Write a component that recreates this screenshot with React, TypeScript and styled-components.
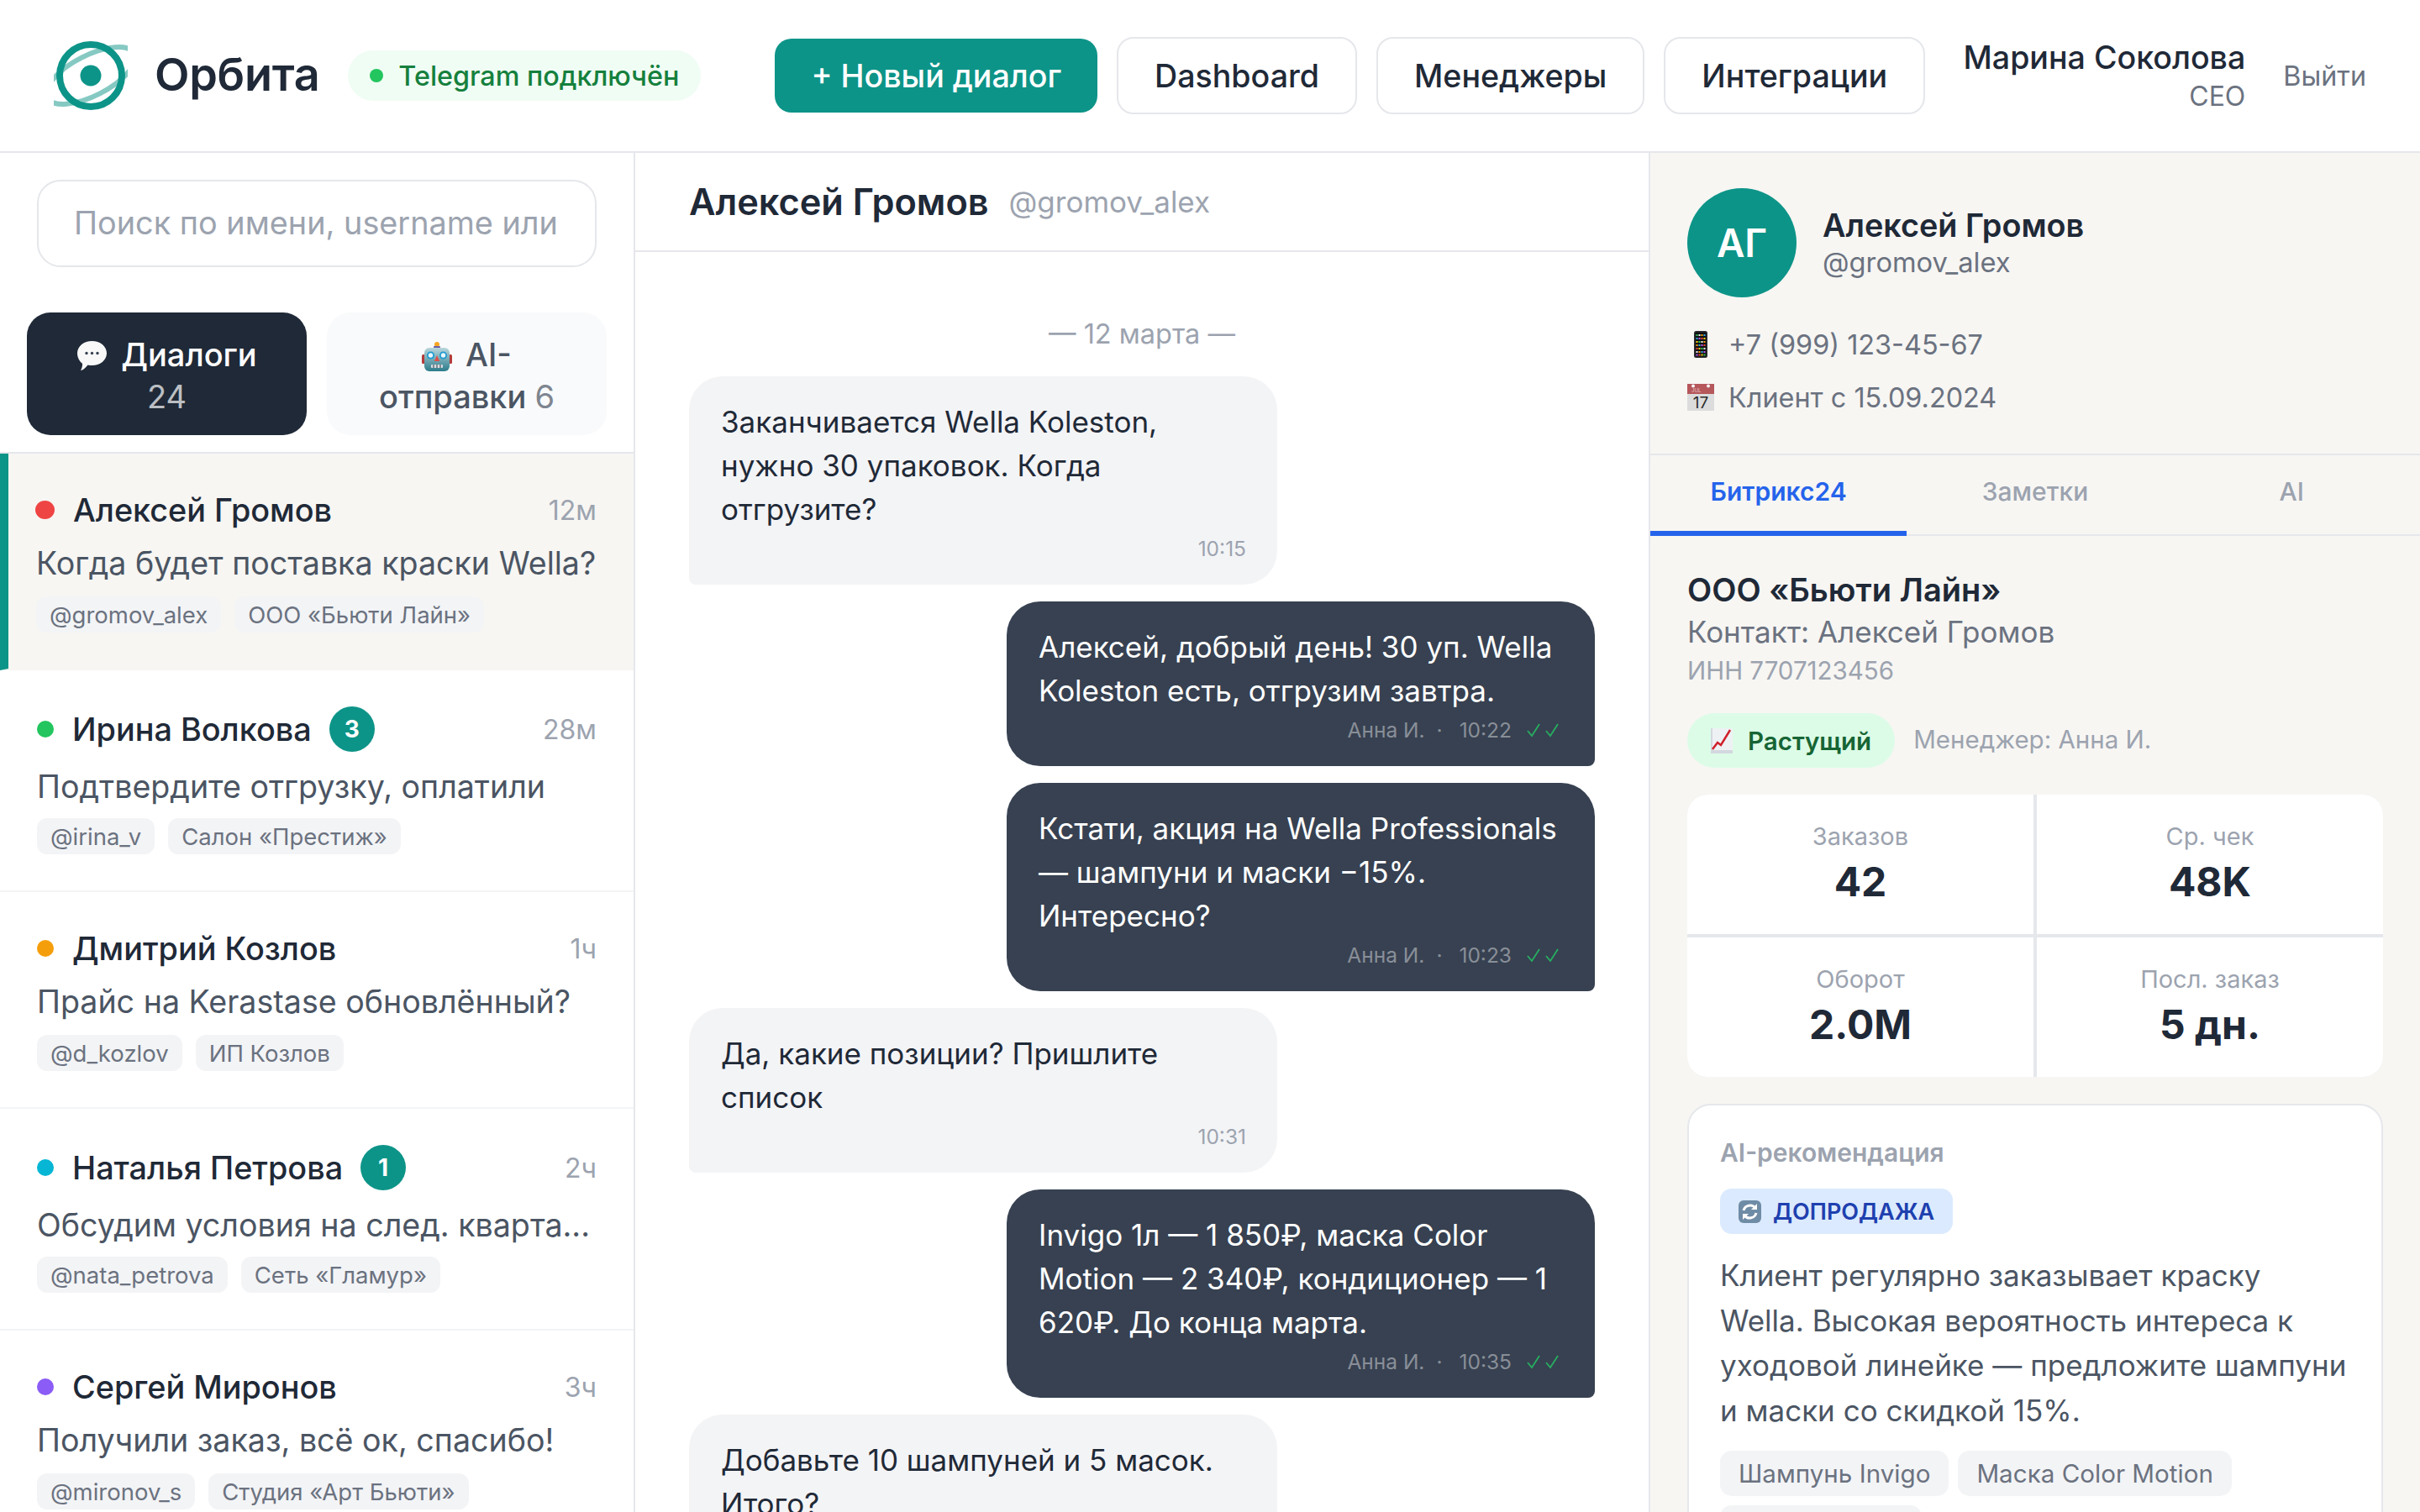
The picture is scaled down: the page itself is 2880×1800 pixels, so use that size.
import React from "react";
import styled, { createGlobalStyle } from "styled-components";

const GlobalStyle = createGlobalStyle`
  * { box-sizing: border-box; }
  html, body { margin: 0; padding: 0; height: 1800px; overflow: hidden; background: #fff; }
  body { font-family: Inter, "Noto Sans", sans-serif; color: #1f2937; }
  #root { height: 1800px; }
`;

const teal = "#0d9488";

const Page = styled.div`
  display: flex;
  flex-direction: column;
  width: 2880px;
  height: 1800px;
  overflow: hidden;
`;

const Header = styled.header`
  display: flex;
  align-items: center;
  height: 182px;
  flex: none;
  padding: 0 64px;
  border-bottom: 2px solid #e5e7eb;
  white-space: nowrap;
`;

const Logo = styled.svg`
  width: 88px;
  height: 88px;
  flex: none;
`;

const Brand = styled.div`
  margin: 0 0 3px 32px;
  font-size: 54px;
  font-weight: 600;
  letter-spacing: -0.3px;
  color: #1f2937;
`;

const StatusPill = styled.div`
  display: flex;
  align-items: center;
  gap: 18px;
  height: 60px;
  margin-left: 34px;
  padding: 0 26px;
  border-radius: 30px;
  background: #f0fdf4;
  color: #15803d;
  font-size: 32.300px;
  font-weight: 500;
`;

const StatusDot = styled.span`
  width: 16px;
  height: 16px;
  border-radius: 50%;
  background: #22c55e;
`;

const Nav = styled.nav`
  display: flex;
  align-items: center;
  gap: 23px;
  margin-left: 88px;
`;

const NavButton = styled.button<{ $primary?: boolean }>`
  height: ${(p) => (p.$primary ? "88px" : "92px")};
  padding: 0 43px;
  border: ${(p) => (p.$primary ? "none" : "2px solid #e5e7eb")};
  border-radius: 20px;
  background: ${(p) => (p.$primary ? teal : "#fff")};
  color: ${(p) => (p.$primary ? "#fff" : "#1f2937")};
  font-family: inherit;
  font-size: 37.600px;
  font-weight: 500;
`;

const User = styled.div`
  margin-left: auto;
  text-align: right;
`;

const UserName = styled.div`
  font-size: 37.600px;
  font-weight: 500;
  line-height: 48px;
  color: #1f2937;
`;

const UserRole = styled.div`
  margin-top: 2px;
  font-size: 32px;
  line-height: 40px;
  color: #6b7280;
`;

const Logout = styled.div`
  margin-left: 45px;
  font-size: 32.300px;
  color: #6b7280;
`;

const Main = styled.main`
  display: flex;
  flex: 1;
  min-height: 0;
`;

const Sidebar = styled.aside`
  width: 756px;
  flex: none;
  border-right: 2px solid #e5e7eb;
  overflow: hidden;
`;

const SearchWrap = styled.div`
  padding: 32px 44px 54px;
`;

const SearchInput = styled.input`
  display: block;
  width: 100%;
  height: 104px;
  padding: 0 42px 2px;
  border: 2px solid #e5e7eb;
  border-radius: 28px;
  background: #fff;
  font-family: inherit;
  font-size: 37.800px;
  outline: none;
  &::placeholder { color: #9ca3af; opacity: 1; }
`;

const Tabs = styled.div`
  display: grid;
  grid-template-columns: 1fr 1fr;
  gap: 24px;
  padding: 0 32px 20px;
  border-bottom: 2px solid #e5e7eb;
`;

const TabButton = styled.div<{ $active?: boolean }>`
  height: 146px;
  padding: 25px 44px;
  border-radius: 28px;
  background: ${(p) => (p.$active ? "#1f2937" : "#f9fafb")};
  color: ${(p) => (p.$active ? "#fff" : "#4b5563")};
  font-size: 38px;
  font-weight: 500;
  line-height: 50px;
  text-align: center;
  svg { vertical-align: -6px; margin-right: 16px; }
`;

const TabCount = styled.span`
  opacity: 0.7;
  font-weight: 400;
`;

const ChatRow = styled.div<{ $active?: boolean }>`
  padding: 43px 44px 43px ${(p) => (p.$active ? "33px" : "44px")};
  background: ${(p) => (p.$active ? "#f7f6f3" : "#fff")};
  border-left: ${(p) => (p.$active ? `10px solid ${teal}` : "none")};
  border-bottom: 2px solid ${(p) => (p.$active ? "#f7f6f3" : "#f3f4f6")};
`;

const RowTop = styled.div`
  display: flex;
  align-items: center;
`;

const PresenceDot = styled.span<{ $color: string; $big?: boolean }>`
  width: ${(p) => (p.$big ? "23px" : "20px")};
  height: ${(p) => (p.$big ? "22px" : "20px")};
  margin-left: ${(p) => (p.$big ? "-1px" : "0")};
  margin-right: 22px;
  flex: none;
  border-radius: 50%;
  background: ${(p) => p.$color};
`;

const RowName = styled.div`
  font-size: 37.800px;
  font-weight: 500;
  line-height: 48px;
  color: #1f2937;
`;

const UnreadBadge = styled.span`
  display: flex;
  align-items: center;
  justify-content: center;
  width: 54px;
  height: 54px;
  margin-left: 21px;
  border-radius: 50%;
  background: ${teal};
  color: #fff;
  font-size: 28px;
  font-weight: 700;
`;

const RowTime = styled.div`
  margin-left: auto;
  font-size: 32px;
  color: #9ca3af;
`;

const RowPreview = styled.div<{ $tall?: boolean }>`
  margin-top: ${(p) => (p.$tall ? "18px" : "16px")};
  font-size: 37.600px;
  line-height: 48px;
  color: #4b5563;
  white-space: nowrap;
`;

const RowTags = styled.div<{ $tall?: boolean }>`
  display: flex;
  gap: 16px;
  margin-top: ${(p) => (p.$tall ? "13px" : "15px")};
`;

const Tag = styled.span`
  display: flex;
  align-items: center;
  height: 43px;
  padding: 0 16px;
  border-radius: 12px;
  background: #f3f4f6;
  color: #6b7280;
  font-size: 27.500px;
`;

const Chat = styled.section`
  width: 1206px;
  flex: none;
  display: flex;
  flex-direction: column;
  overflow: hidden;
`;

const ChatHeader = styled.div`
  display: flex;
  align-items: center;
  gap: 24px;
  height: 118px;
  flex: none;
  padding: 0 64px;
  border-bottom: 2px solid #e5e7eb;
`;

const ChatTitle = styled.div`
  font-size: 43.300px;
  font-weight: 600;
  color: #1f2937;
`;

const ChatHandle = styled.div`
  font-size: 35px;
  color: #9ca3af;
`;

const Messages = styled.div`
  display: flex;
  flex-direction: column;
  gap: 20px;
  padding: 76px 64px 0;
`;

const DateLine = styled.div`
  margin-bottom: 8px;
  font-size: 32.500px;
  line-height: 44px;
  text-align: center;
  color: #9ca3af;
`;

const Bubble = styled.div<{ $out?: boolean }>`
  width: 700px;
  padding: 28px 38px 27px;
  align-self: ${(p) => (p.$out ? "flex-end" : "flex-start")};
  border-radius: ${(p) => (p.$out ? "40px 40px 8px 40px" : "40px 40px 40px 8px")};
  background: ${(p) => (p.$out ? "#374151" : "#f3f4f6")};
  color: ${(p) => (p.$out ? "#fff" : "#1f2937")};
  font-size: 35px;
  line-height: 52px;
  flex: none;
`;

const Meta = styled.div<{ $out?: boolean }>`
  display: flex;
  align-items: center;
  justify-content: flex-end;
  gap: 18px;
  margin-top: 5px;
  margin-right: ${(p) => (p.$out ? "0" : "-1px")};
  font-size: 24.500px;
  line-height: 32px;
  color: ${(p) => (p.$out ? "rgba(255,255,255,0.42)" : "#9ca3af")};
`;

const MetaDot = styled.span`
  margin: 0 2px 0 -4px;
`;

const Ticks = styled.svg`
  width: 40px;
  height: 18px;
  margin-right: 3px;
`;

const Info = styled.aside`
  flex: 1;
  min-width: 0;
  border-left: 2px solid #e5e7eb;
  background: #f7f6f3;
  overflow: hidden;
`;

const Profile = styled.div`
  padding: 42px 44px 0;
  height: 360px;
  border-bottom: 2px solid #e5e7eb;
`;

const ProfileTop = styled.div`
  display: flex;
  align-items: center;
  gap: 31px;
`;

const Avatar = styled.div`
  display: flex;
  align-items: center;
  justify-content: center;
  width: 130px;
  height: 130px;
  border-radius: 50%;
  background: ${teal};
  color: #fff;
  font-size: 46px;
  font-weight: 600;
`;

const ProfileName = styled.div`
  font-size: 37.800px;
  font-weight: 600;
  line-height: 46px;
  color: #1f2937;
`;

const ProfileHandle = styled.div`
  font-size: 32.700px;
  line-height: 42px;
  color: #6b7280;
`;

const ContactRows = styled.div`
  display: flex;
  flex-direction: column;
  gap: 23px;
  margin-top: 36px;
`;

const ContactRow = styled.div`
  display: flex;
  align-items: center;
  height: 40px;
  font-size: 32.400px;
  color: #6b7280;
`;

const ContactIcon = styled.span`
  display: flex;
  justify-content: center;
  width: 32px;
  margin-right: 17px;
`;

const InfoTabs = styled.div`
  display: grid;
  grid-template-columns: repeat(3, 1fr);
  height: 96px;
  border-bottom: 2px solid #e5e7eb;
`;

const InfoTab = styled.div<{ $active?: boolean }>`
  display: flex;
  align-items: center;
  justify-content: center;
  margin-bottom: -2px;
  padding-bottom: 4px;
  border-bottom: 6px solid ${(p) => (p.$active ? "#2563eb" : "transparent")};
  color: ${(p) => (p.$active ? "#2563eb" : "#9ca3af")};
  font-size: 30px;
  font-weight: ${(p) => (p.$active ? 600 : 500)};
`;

const InfoBody = styled.div`
  padding: 40px 44px 0;
`;

const Company = styled.div`
  font-size: 38px;
  font-weight: 600;
  line-height: 48px;
  color: #1f2937;
`;

const CompanyContact = styled.div`
  margin-top: 2px;
  font-size: 35px;
  line-height: 48px;
  color: #6b7280;
`;

const CompanyInn = styled.div`
  margin-top: 2px;
  font-size: 29.500px;
  line-height: 40px;
  color: #9ca3af;
`;

const GrowthRow = styled.div`
  display: flex;
  align-items: center;
  gap: 22px;
  margin-top: 31px;
`;

const GrowthPill = styled.div`
  display: flex;
  align-items: center;
  gap: 18px;
  height: 65px;
  padding: 0 28px;
  border-radius: 33px;
  background: #dcfce7;
  color: #166534;
  font-size: 29.500px;
  font-weight: 600;
`;

const ManagerText = styled.div`
  margin-bottom: 4px;
  font-size: 29.500px;
  color: #9ca3af;
`;

const StatGrid = styled.div`
  display: grid;
  grid-template-columns: 1fr 1fr;
  gap: 4px;
  margin-top: 32px;
  border-radius: 24px;
  overflow: hidden;
  background: #e5e7eb;
`;

const StatCell = styled.div`
  height: 166px;
  padding-top: 32px;
  background: #fff;
  text-align: center;
`;

const StatLabel = styled.div`
  font-size: 29px;
  line-height: 36px;
  color: #9ca3af;
`;

const StatValue = styled.div`
  margin-top: 7px;
  font-size: 48px;
  font-weight: 700;
  line-height: 58px;
  color: #1f2937;
`;

const AiCard = styled.div`
  margin-top: 32px;
  padding: 37px;
  border: 2px solid #e5e7eb;
  border-radius: 28px;
  background: #fff;
`;

const AiTitle = styled.div`
  font-size: 30px;
  font-weight: 600;
  line-height: 38px;
  color: #9ca3af;
`;

const AiBadge = styled.div`
  display: inline-flex;
  align-items: center;
  gap: 14px;
  height: 54px;
  margin-top: 24px;
  padding: 0 22px;
  border-radius: 14px;
  background: #dbeafe;
  color: #1e40af;
  font-size: 27px;
  font-weight: 600;
  text-transform: uppercase;
`;

const AiText = styled.div`
  margin-top: 23px;
  font-size: 35px;
  line-height: 53.500px;
  color: #4b5563;
`;

const ChipList = styled.div`
  display: flex;
  flex-wrap: wrap;
  gap: 11px;
  margin-top: 21px;
`;

const Chip = styled.span`
  display: flex;
  align-items: center;
  height: 54px;
  padding: 0 22px;
  border-radius: 14px;
  background: #f3f4f6;
  color: #6b7280;
  font-size: 29.600px;
`;

const BubbleEmoji = () => (
  <svg width="37" height="37" viewBox="0 0 37 37">
    <path d="M18.500 1C28 1 36 7 36 15.500S28 30 18.500 30c-1.800 0-3.400-.2-5-.6-2 2.800-5 5.800-8.500 6.600 1.500-2.500 2.200-5 2-8.200C3.500 25 1 20.500 1 15.500 1 7 9 1 18.500 1z" fill="#f8f8f9" />
    <circle cx="12" cy="15.500" r="1.700" fill="#374151" />
    <circle cx="18.500" cy="15.500" r="1.700" fill="#374151" />
    <circle cx="25" cy="15.500" r="1.700" fill="#374151" />
  </svg>
);

const RobotEmoji = () => (
  <svg width="36" height="35" viewBox="0 0 36 35">
    <defs>
      <linearGradient id="robotHead" x1="0" y1="0" x2="0" y2="1">
        <stop offset="0" stopColor="#b9d6dc" />
        <stop offset="1" stopColor="#2c7c8c" />
      </linearGradient>
    </defs>
    <circle cx="18" cy="3" r="3" fill="#f5a623" />
    <rect x="14" y="5" width="8" height="2.500" rx="1" fill="#6d5fa8" />
    <rect x="0" y="15" width="4" height="11" rx="1.500" fill="#b53a3a" />
    <rect x="32" y="15" width="4" height="11" rx="1.500" fill="#b53a3a" />
    <rect x="3" y="7" width="30" height="28" rx="6" fill="url(#robotHead)" />
    <circle cx="10.500" cy="16" r="4.500" fill="#1f9bd1" />
    <circle cx="25.500" cy="16" r="4.500" fill="#1f9bd1" />
    <circle cx="10.500" cy="16" r="2.700" fill="#eaf8fd" />
    <circle cx="25.500" cy="16" r="2.700" fill="#eaf8fd" />
    <path d="M18 16l3.200 7h-6.400z" fill="#df4f4a" />
    <rect x="11" y="27" width="14" height="4" rx="1" fill="#d7dde0" />
    <path d="M14 27v4M18 27v4M22 27v4" stroke="#4b5563" strokeWidth="1.200" />
  </svg>
);

const PhoneEmoji = () => (
  <svg width="16" height="32" viewBox="0 0 16 32">
    <rect width="16" height="32" rx="2.500" fill="#2b2d31" />
    <rect x="1.500" y="1.500" width="13" height="29" rx="1" fill="#0f1012" />
    {[4, 8, 12, 16, 20, 24, 27.5].map((y, r) =>
      [2.5, 5.5, 8.5, 11.5].map((x, c) => (
        <rect
          key={`${r}-${c}`}
          x={x}
          y={y}
          width="2"
          height="2"
          fill={["#34c759", "#f5f5f5", "#ff9f0a", "#32ade6", "#bf5af2", "#ff453a", "#ffd60a"][(r * 3 + c) % 7]}
        />
      ))
    )}
  </svg>
);

const CalendarEmoji = () => (
  <svg width="32" height="32" viewBox="0 0 32 32">
    <rect width="32" height="32" fill="#dcdcdc" />
    <rect width="32" height="12" fill="#b5575b" />
    <circle cx="7" cy="2.500" r="2" fill="#f4f4f4" />
    <circle cx="25" cy="2.500" r="2" fill="#f4f4f4" />
    <text x="5" y="9.500" fontFamily="Inter, sans-serif" fontSize="6" fill="#e6c9ca">JUL</text>
    <text x="16" y="29" textAnchor="middle" fontFamily="Inter, sans-serif" fontSize="19" fill="#2b2b2b">17</text>
  </svg>
);

const ChartEmoji = () => (
  <svg width="26" height="30" viewBox="0 0 26 30">
    <rect width="26" height="30" fill="#d3d8df" />
    <rect x="2" y="0" width="24" height="26" fill="#eef1f4" />
    <path d="M2 25l6-8 4 3 11-18" fill="none" stroke="#d01f2a" strokeWidth="2.500" />
  </svg>
);

const RefreshEmoji = () => (
  <svg width="27" height="27" viewBox="0 0 27 27">
    <rect width="27" height="27" rx="6" fill="#6f8ca6" />
    <path d="M6 12a8 8 0 0 1 14-3" fill="none" stroke="#fff" strokeWidth="3" />
    <path d="M22 4v7h-7z" fill="#fff" />
    <path d="M21 15a8 8 0 0 1-14 3" fill="none" stroke="#fff" strokeWidth="3" />
    <path d="M5 23v-7h7z" fill="#fff" />
  </svg>
);

const DoubleCheck = () => (
  <Ticks viewBox="0 0 40 18">
    <path d="M1 10l5 6L15 2M23 10l5 6 9-14" fill="none" stroke="#27ae60" strokeWidth="1.800" />
  </Ticks>
);

const chats = [
  { name: "Алексей Громов", dot: "#ef4444", time: "12м", text: "Когда будет поставка краски Wella?", handle: "@gromov_alex", org: "ООО «Бьюти Лайн»", active: true },
  { name: "Ирина Волкова", dot: "#22c55e", time: "28м", badge: 3, text: "Подтвердите отгрузку, оплатили", handle: "@irina_v", org: "Салон «Престиж»" },
  { name: "Дмитрий Козлов", dot: "#f59e0b", time: "1ч", text: "Прайс на Kerastase обновлённый?", handle: "@d_kozlov", org: "ИП Козлов" },
  { name: "Наталья Петрова", dot: "#06b6d4", time: "2ч", badge: 1, text: "Обсудим условия на след. кварта...", handle: "@nata_petrova", org: "Сеть «Гламур»" },
  { name: "Сергей Миронов", dot: "#8b5cf6", time: "3ч", text: "Получили заказ, всё ок, спасибо!", handle: "@mironov_s", org: "Студия «Арт Бьюти»" },
];

const messages = [
  { lines: ["Заканчивается Wella Koleston,", "нужно 30 упаковок. Когда", "отгрузите?"], time: "10:15" },
  { out: true, lines: ["Алексей, добрый день! 30 уп. Wella", "Koleston есть, отгрузим завтра."], time: "10:22" },
  { out: true, lines: ["Кстати, акция на Wella Professionals", "— шампуни и маски −15%.", "Интересно?"], time: "10:23" },
  { lines: ["Да, какие позиции? Пришлите", "список"], time: "10:31" },
  { out: true, lines: ["Invigo 1л — 1 850₽, маска Color", "Motion — 2 340₽, кондиционер — 1", "620₽. До конца марта."], time: "10:35" },
  { lines: ["Добавьте 10 шампуней и 5 масок.", "Итого?"], time: "10:38" },
];

const stats = [
  { label: "Заказов", value: "42" },
  { label: "Ср. чек", value: "48K" },
  { label: "Оборот", value: "2.0M" },
  { label: "Посл. заказ", value: "5 дн." },
];

export default function App() {
  return (
    <Page>
      <GlobalStyle />
      <Header>
        <Logo viewBox="0 0 88 88">
          <ellipse cx="44" cy="44" rx="58" ry="24" fill="none" stroke={teal} strokeWidth="6" opacity="0.5" transform="rotate(-27 44 44)" />
          <circle cx="44" cy="44" r="37" fill="none" stroke={teal} strokeWidth="8" />
          <circle cx="44" cy="44" r="12.500" fill={teal} />
        </Logo>
        <Brand>Орбита</Brand>
        <StatusPill>
          <StatusDot />
          Telegram подключён
        </StatusPill>
        <Nav>
          <NavButton $primary>+ Новый диалог</NavButton>
          <NavButton>Dashboard</NavButton>
          <NavButton>Менеджеры</NavButton>
          <NavButton>Интеграции</NavButton>
        </Nav>
        <User>
          <UserName>Марина Соколова</UserName>
          <UserRole>CEO</UserRole>
        </User>
        <Logout>Выйти</Logout>
      </Header>
      <Main>
        <Sidebar>
          <SearchWrap>
            <SearchInput placeholder="Поиск по имени, username или телефону" />
          </SearchWrap>
          <Tabs>
            <TabButton $active>
              <BubbleEmoji />
              Диалоги <TabCount>24</TabCount>
            </TabButton>
            <TabButton>
              <RobotEmoji />
              AI-отправки <TabCount>6</TabCount>
            </TabButton>
          </Tabs>
          {chats.map((c) => (
            <ChatRow key={c.handle} $active={c.active}>
              <RowTop>
                <PresenceDot $color={c.dot} $big={c.active} />
                <RowName>{c.name}</RowName>
                {c.badge && <UnreadBadge>{c.badge}</UnreadBadge>}
                <RowTime>{c.time}</RowTime>
              </RowTop>
              <RowPreview $tall={!!c.badge}>{c.text}</RowPreview>
              <RowTags $tall={!!c.badge}>
                <Tag>{c.handle}</Tag>
                <Tag>{c.org}</Tag>
              </RowTags>
            </ChatRow>
          ))}
        </Sidebar>
        <Chat>
          <ChatHeader>
            <ChatTitle>Алексей Громов</ChatTitle>
            <ChatHandle>@gromov_alex</ChatHandle>
          </ChatHeader>
          <Messages>
            <DateLine>— 12 марта —</DateLine>
            {messages.map((m) => (
              <Bubble key={m.time} $out={m.out}>
                {m.lines.map((l) => (
                  <div key={l}>{l}</div>
                ))}
                <Meta $out={m.out}>
                  {m.out && <span>Анна И.</span>}
                  {m.out && <MetaDot>·</MetaDot>}
                  <span>{m.time}</span>
                  {m.out && <DoubleCheck />}
                </Meta>
              </Bubble>
            ))}
          </Messages>
        </Chat>
        <Info>
          <Profile>
            <ProfileTop>
              <Avatar>АГ</Avatar>
              <div>
                <ProfileName>Алексей Громов</ProfileName>
                <ProfileHandle>@gromov_alex</ProfileHandle>
              </div>
            </ProfileTop>
            <ContactRows>
              <ContactRow>
                <ContactIcon><PhoneEmoji /></ContactIcon>
                +7 (999) 123-45-67
              </ContactRow>
              <ContactRow>
                <ContactIcon><CalendarEmoji /></ContactIcon>
                Клиент с 15.09.2024
              </ContactRow>
            </ContactRows>
          </Profile>
          <InfoTabs>
            <InfoTab $active>Битрикс24</InfoTab>
            <InfoTab>Заметки</InfoTab>
            <InfoTab>AI</InfoTab>
          </InfoTabs>
          <InfoBody>
            <Company>ООО «Бьюти Лайн»</Company>
            <CompanyContact>Контакт: Алексей Громов</CompanyContact>
            <CompanyInn>ИНН 7707123456</CompanyInn>
            <GrowthRow>
              <GrowthPill>
                <ChartEmoji />
                Растущий
              </GrowthPill>
              <ManagerText>Менеджер: Анна И.</ManagerText>
            </GrowthRow>
            <StatGrid>
              {stats.map((s) => (
                <StatCell key={s.label}>
                  <StatLabel>{s.label}</StatLabel>
                  <StatValue>{s.value}</StatValue>
                </StatCell>
              ))}
            </StatGrid>
            <AiCard>
              <AiTitle>AI-рекомендация</AiTitle>
              <AiBadge>
                <RefreshEmoji />
                Допродажа
              </AiBadge>
              <AiText>
                Клиент регулярно заказывает краску Wella. Высокая вероятность интереса к уходовой линейке — предложите шампуни и маски со скидкой 15%.
              </AiText>
              <ChipList>
                <Chip>Шампунь Invigo</Chip>
                <Chip>Маска Color Motion</Chip>
                <Chip>Кондиционер</Chip>
              </ChipList>
            </AiCard>
          </InfoBody>
        </Info>
      </Main>
    </Page>
  );
}
